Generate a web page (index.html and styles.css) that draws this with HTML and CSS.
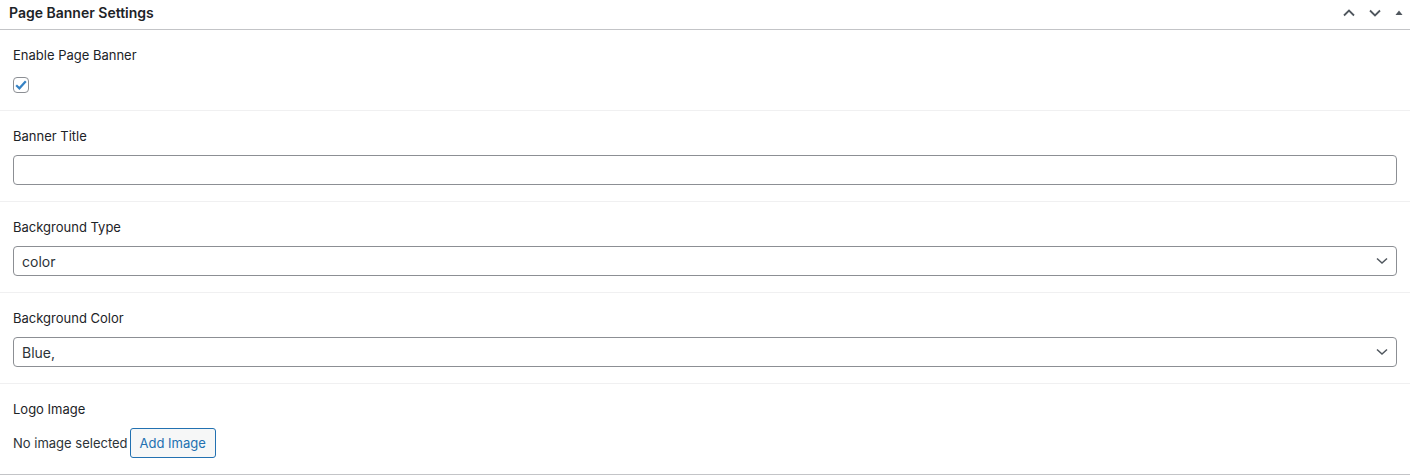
FILE: index.html
```html
<!DOCTYPE html>
<html lang="en">

<head>
    <meta charset="UTF-8">
    <meta name="viewport" content="width=device-width, initial-scale=1.0">
    <title>Page Banner Settings</title>
    <link rel="stylesheet" href="styles.css">
</head>

<body>

    <div class="postbox">
        <div class="postbox-header">
            <h2 class="hndle">Page Banner Settings</h2>
            <div class="handle-actions">
                <button class="handle-btn" aria-label="Move up">
                    <svg width="14" height="14" viewBox="0 0 14 14"><path d="M2 9.5 L7 4.5 L12 9.5" fill="none" stroke="#50575e" stroke-width="1.8"/></svg>
                </button>
                <button class="handle-btn" aria-label="Move down">
                    <svg width="14" height="14" viewBox="0 0 14 14"><path d="M2 4.5 L7 9.5 L12 4.5" fill="none" stroke="#50575e" stroke-width="1.8"/></svg>
                </button>
                <button class="handle-btn small" aria-label="Toggle panel">
                    <svg width="10" height="10" viewBox="0 0 10 10"><path d="M1.5 7 L5 2.5 L8.5 7 Z" fill="#50575e"/></svg>
                </button>
            </div>
        </div>

        <div class="inside">
            <div class="field">
                <label class="field-label">Enable Page Banner</label>
                <span class="checkbox">
                    <svg width="12" height="10" viewBox="0 0 12 10"><path d="M1.2 5.2 L4.4 8.3 L10.8 1.2" fill="none" stroke="#3582c4" stroke-width="2.2"/></svg>
                </span>
            </div>

            <div class="field">
                <label class="field-label">Banner Title</label>
                <input class="text-input" type="text">
            </div>

            <div class="field">
                <label class="field-label">Background Type</label>
                <div class="select-box">
                    <span>color</span>
                    <svg width="12" height="8" viewBox="0 0 12 8"><path d="M1 1.5 L6 6 L11 1.5" fill="none" stroke="#50575e" stroke-width="1.5"/></svg>
                </div>
            </div>

            <div class="field">
                <label class="field-label">Background Color</label>
                <div class="select-box">
                    <span>Blue,</span>
                    <svg width="12" height="8" viewBox="0 0 12 8"><path d="M1 1.5 L6 6 L11 1.5" fill="none" stroke="#50575e" stroke-width="1.5"/></svg>
                </div>
            </div>

            <div class="field last">
                <label class="field-label">Logo Image</label>
                <div class="image-row">
                    <span class="no-image">No image selected</span>
                    <button class="button">Add Image</button>
                </div>
            </div>
        </div>
    </div>

</body>

</html>
```

FILE: styles.css
```css
* {
    margin: 0;
    padding: 0;
    box-sizing: border-box;
    font-family: Inter, "Liberation Sans", sans-serif;
}

body {
    background-color: #fff;
    color: #1d2327;
    font-size: 13px;
}

.postbox {
    border-bottom: 1px solid #c3c4c7;
}

.postbox-header {
    height: 30px;
    display: flex;
    align-items: center;
    justify-content: space-between;
    border-bottom: 1px solid #c3c4c7;
    padding-left: 9px;
}

.hndle {
    font-size: 14px;
    font-weight: 600;
    color: #1d2327;
    margin-top: -4px;
}

.handle-actions {
    display: flex;
    align-items: center;
    margin-top: -4px;
}

.handle-btn {
    border: none;
    background: none;
    width: 26px;
    height: 22px;
    display: flex;
    align-items: center;
    justify-content: center;
}

.handle-btn.small {
    width: 22px;
}

.field {
    padding: 15px 13px 16px;
    border-bottom: 1px solid #f0f0f1;
}

.field.last {
    border-bottom: none;
}

.field-label {
    display: block;
    height: 20px;
    line-height: 20px;
    margin-bottom: 9px;
    color: #1d2327;
}

/* label margin collapses into this one */
.checkbox {
    display: flex;
    align-items: center;
    justify-content: center;
    width: 16px;
    height: 16px;
    margin: 12px 0 1px;
    border: 1px solid #8c8f94;
    border-radius: 4px;
}

.text-input {
    display: block;
    width: 100%;
    height: 30px;
    border: 1px solid #8c8f94;
    border-radius: 4px;
    outline: none;
}

.select-box {
    display: flex;
    align-items: center;
    justify-content: space-between;
    height: 30px;
    padding: 0 8px 0 8px;
    border: 1px solid #8c8f94;
    border-radius: 4px;
    color: #2c3338;
    font-size: 14px;
}

.image-row {
    display: flex;
    align-items: center;
    gap: 2px;
}

.no-image {
    color: #2c3338;
}

.button {
    height: 30px;
    padding: 0 9px;
    border: 1px solid #2271b1;
    border-radius: 3px;
    background-color: #f6f7f7;
    color: #2271b1;
    font-size: 13px;
}
```
